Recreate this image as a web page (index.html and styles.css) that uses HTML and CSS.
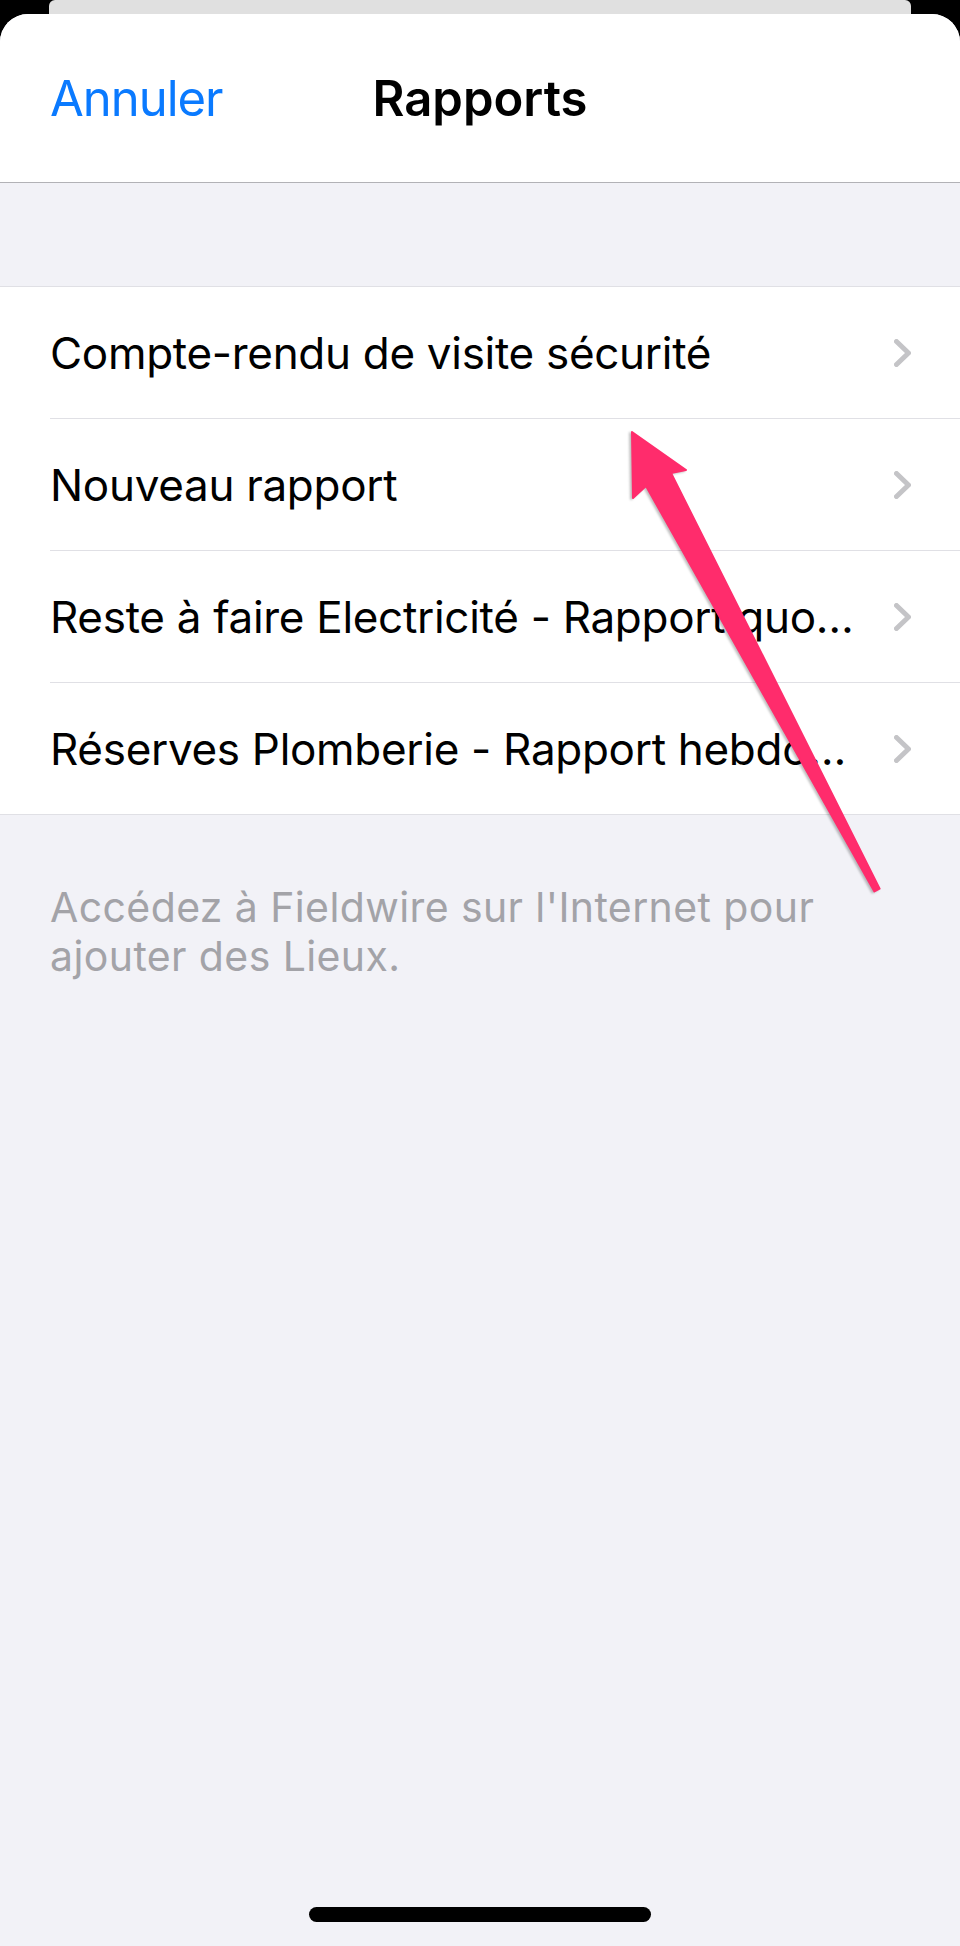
FILE: index.html
```html
<!DOCTYPE html>
<html lang="fr">
<head>
    <meta charset="UTF-8">
    <meta name="viewport" content="width=device-width, initial-scale=1.0">
    <title>Rapports</title>
    <link rel="stylesheet" href="styles.css">
</head>
<body>

<div class="screen">
    <div class="back-card"></div>

    <div class="sheet">
        <div class="navbar">
            <span class="cancel">Annuler</span>
            <span class="title">Rapports</span>
            <span></span>
        </div>

        <div class="list">
            <div class="row">
                <div class="row-body">
                    <span class="row-label">Compte-rendu de visite sécurité</span>
                    <svg class="chevron" viewBox="0 0 17 28"><path d="M2.5 2.5 L14.5 14 L2.5 25.5"/></svg>
                </div>
            </div>
            <div class="row">
                <div class="row-body">
                    <span class="row-label">Nouveau rapport</span>
                    <svg class="chevron" viewBox="0 0 17 28"><path d="M2.5 2.5 L14.5 14 L2.5 25.5"/></svg>
                </div>
            </div>
            <div class="row">
                <div class="row-body">
                    <span class="row-label">Reste à faire Electricité - Rapport quo…</span>
                    <svg class="chevron" viewBox="0 0 17 28"><path d="M2.5 2.5 L14.5 14 L2.5 25.5"/></svg>
                </div>
            </div>
            <div class="row">
                <div class="row-body">
                    <span class="row-label">Réserves Plomberie - Rapport hebdo…</span>
                    <svg class="chevron" viewBox="0 0 17 28"><path d="M2.5 2.5 L14.5 14 L2.5 25.5"/></svg>
                </div>
            </div>
        </div>

        <p class="footer-note">Accédez à Fieldwire sur l'Internet pour ajouter des Lieux.</p>
    </div>

    <!-- annotation arrow drawn over the screenshot -->
    <svg class="annotation" viewBox="0 0 960 1946">
        <polygon points="632,432 686,470 671,473 879.6,888.6 874.4,891.4 646,486 633,498"/>
    </svg>

    <div class="home-indicator"></div>
</div>

</body>
</html>
```

FILE: styles.css
```css
body {
    margin: 0;
    background: #000;
    font-family: Inter, "Noto Sans", sans-serif;
}
.screen {
    position: relative;
    height: 1946px;
    display: flex;
    flex-direction: column;
    overflow: hidden;
}
.back-card {
    height: 14px;
    margin: 0 49px;
    background: #e0e0e0;
    border-radius: 6px 6px 0 0;
}
.sheet {
    flex: 1;
    display: flex;
    flex-direction: column;
    background: #f2f2f7;
    border-radius: 28px 28px 0 0;
    overflow: hidden;
}
.navbar {
    height: 168px;
    background: #fff;
    border-bottom: 1px solid #b2b2b6;
    display: grid;
    grid-template-columns: 1fr auto 1fr;
    align-items: center;
    padding: 0 50px;
}
.cancel {
    justify-self: start;
    color: #0a7aff;
    font-size: 49px;
    letter-spacing: -1px;
}
.title {
    font-size: 49px;
    font-weight: 600;
    color: #000;
}
.list {
    margin-top: 103px;
    background: #fff;
    border-top: 1px solid #e0e0e5;
    border-bottom: 1px solid #e0e0e5;
}
.row {
    padding-left: 50px;
}
.row-body {
    height: 131px;
    display: flex;
    align-items: center;
    gap: 30px;
    padding-right: 49px;
    border-bottom: 1px solid #e0e0e5;
}
.row:last-child .row-body {
    border-bottom: none;
}
.row-label {
    flex: 1;
    min-width: 0;
    font-size: 44px;
    letter-spacing: -0.3px;
    color: #000;
    white-space: nowrap;
    overflow: hidden;
    text-overflow: ellipsis;
}
.chevron {
    width: 17px;
    height: 28px;
    flex-shrink: 0;
    fill: none;
    stroke: #c4c4c7;
    stroke-width: 5;
    stroke-linecap: round;
    stroke-linejoin: round;
}
.footer-note {
    margin: 68px 50px 0;
    font-size: 41px;
    letter-spacing: 0.4px;
    line-height: 49px;
    color: #a3a3a8;
}
.annotation {
    position: absolute;
    top: 0;
    left: 0;
    width: 960px;
    height: 1946px;
    pointer-events: none;
    fill: #ff2c6c;
    stroke: #ff2c6c;
    stroke-width: 2;
    stroke-linejoin: round;
    filter: drop-shadow(-2px 1px 1px rgba(0, 0, 0, 0.25));
}
.home-indicator {
    position: absolute;
    left: 309px;
    bottom: 24px;
    width: 342px;
    height: 15px;
    border-radius: 8px;
    background: #000;
}
```
